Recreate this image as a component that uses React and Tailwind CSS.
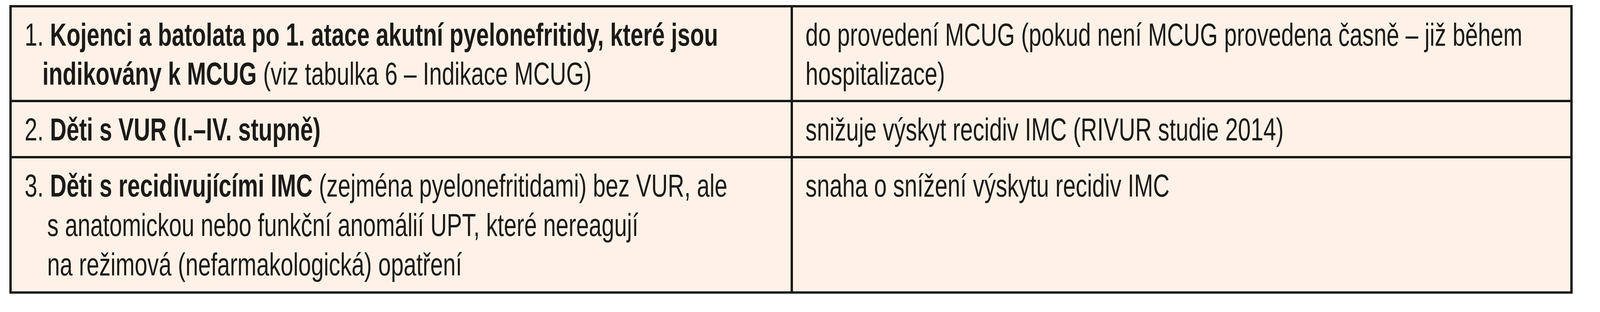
// The table is laid out on the 4656px-wide design; widths are fractions of the page,
// so the text is squeezed horizontally by the ratio of the real viewport to that design.
const font = { fontFamily: '"Liberation Sans", Arial, sans-serif' };

function useSqueeze() {
  const k = typeof window !== 'undefined' ? window.innerWidth / 4656 : 1;
  return { transform: `scaleX(${0.82 * k})` };
}

function Row({ children, className = '' }) {
  return <div className={`grid grid-cols-[50.13%_1fr] ${className}`}>{children}</div>;
}

function LeftCell({ children, hang = 'pl-[63px] -indent-[63px]', leading = 'leading-[100px]' }) {
  const squeeze = useSqueeze();
  return (
    <div className="min-w-0 overflow-hidden border-r-[6px] border-[#1b1915] pt-[20px] pl-[0.816vw]">
      <p className={`w-max origin-left whitespace-nowrap ${hang} ${leading}`} style={squeeze}>
        {children}
      </p>
    </div>
  );
}

function RightCell({ children }) {
  const squeeze = useSqueeze();
  return (
    <div className="min-w-0 overflow-hidden pt-[20px] pl-[0.773vw]">
      <p className="w-max origin-left whitespace-nowrap leading-[100px]" style={squeeze}>
        {children}
      </p>
    </div>
  );
}

export default function App() {
  return (
    <div className="h-[800px] overflow-hidden bg-white pt-[13px]" style={font}>
      <div className="ml-[0.58%] w-[97.72%] border-[6px] border-[#1b1915] bg-[#fef2e8] text-[81px] text-[#1c1a17]">
        <Row className="h-[237px]">
          <LeftCell>
            1. <b className="font-bold">Kojenci a batolata po 1. atace akutní pyelonefritidy, které jsou</b>
            <br />
            <b className="font-bold">indikovány k MCUG</b> (viz tabulka 6 – Indikace MCUG)
          </LeftCell>
          <RightCell>
            do provedení MCUG (pokud není MCUG provedena časně – již během
            <br />
            hospitalizace)
          </RightCell>
        </Row>

        <Row className="h-[144px] border-t-[6px] border-[#1b1915]">
          <LeftCell>
            2. <b className="font-bold">Děti s VUR (I.–IV. stupně)</b>
          </LeftCell>
          <RightCell>snižuje výskyt recidiv IMC (RIVUR studie 2014)</RightCell>
        </Row>

        <Row className="h-[347px] border-t-[6px] border-[#1b1915]">
          <LeftCell hang="pl-[80px] -indent-[80px]" leading="leading-[101px]">
            3. <b className="font-bold">Děti s recidivujícími IMC</b> (zejména pyelonefritidami) bez VUR, ale
            <br />
            s anatomickou nebo funkční anomálií UPT, které nereagují
            <br />
            na režimová (nefarmakologická) opatření
          </LeftCell>
          <RightCell>snaha o snížení výskytu recidiv IMC</RightCell>
        </Row>
      </div>
    </div>
  );
}
